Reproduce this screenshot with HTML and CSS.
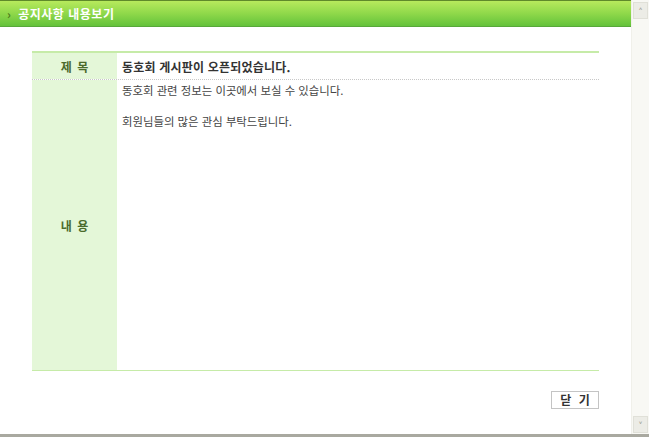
FILE: index.html
```
<!DOCTYPE html>
<html lang="ko">
<head>
    <meta charset="UTF-8">
    <title>공지사항 내용보기</title>
    <link rel="stylesheet" href="styles.css">
</head>
<body>
    <div class="frame">
        <div class="page">
            <div class="title-bar"><span class="arrow">&#8250;</span> 공지사항 내용보기</div>
            <div class="content">
                <div class="board">
                    <div class="row subject">
                        <div class="label">제 목</div>
                        <div class="value"><strong>동호회 게시판이 오픈되었습니다.</strong></div>
                    </div>
                    <div class="row body-row">
                        <div class="label">내 용</div>
                        <div class="value">
                            <p>동호회 관련 정보는 이곳에서 보실 수 있습니다.</p>
                            <p>&nbsp;</p>
                            <p>회원님들의 많은 관심 부탁드립니다.</p>
                        </div>
                    </div>
                </div>
                <div class="actions">
                    <button class="btn">닫 기</button>
                </div>
            </div>
        </div>
        <div class="scrollbar">
            <div class="scroll-btn">&#708;</div>
            <div class="scroll-track"></div>
            <div class="scroll-btn">&#709;</div>
        </div>
    </div>
</body>
</html>
```

FILE: styles.css
```
body {
    margin: 0;
    font-family: "Noto Sans CJK KR", "Noto Sans", sans-serif;
    font-size: 12px;
    color: #444;
    background-color: #fff;
}
.frame {
    display: flex;
    height: 434px;
    border-bottom: 3px solid #a9a9a0;
}
.page {
    width: 632px;
    display: flex;
    flex-direction: column;
}
.title-bar {
    height: 25px;
    line-height: 25px;
    border-top: 1px solid #5f8a2a;
    border-bottom: 1px solid #58a83a;
    background: linear-gradient(#b7ea5d, #8fd84a 50%, #64c23b);
    color: #fff;
    font-weight: bold;
    font-size: 12px;
    padding-left: 7px;
    letter-spacing: 0.5px;
}
.arrow {
    color: #4f7d1c;
    font-weight: bold;
    margin-right: 3px;
}
.content {
    padding: 24px 32px 0 32px;
}
.board {
    border-top: 2px solid #c6eba8;
    border-bottom: 1px solid #c6eba8;
}
.row {
    display: flex;
}
.subject {
    height: 26px;
    border-bottom: 1px dotted #c8c8c8;
}
.body-row {
    height: 290px;
}
.label {
    width: 85px;
    flex-shrink: 0;
    background-color: #e4f7d8;
    display: flex;
    align-items: center;
    justify-content: center;
    font-weight: bold;
    color: #4b6b2c;
    word-spacing: 2px;
}
.subject .value {
    padding-left: 5px;
    display: flex;
    align-items: center;
    color: #333;
    font-size: 12px;
    letter-spacing: 0.2px;
}
.body-row .value {
    padding: 3px 0 0 5px;
    font-size: 11.4px;
}
.value p {
    margin: 0;
    line-height: 15.5px;
}
.actions {
    display: flex;
    justify-content: flex-end;
    padding-top: 20px;
}
.btn {
    width: 48px;
    height: 18px;
    padding: 0 0 0 2px;
    border: 1px solid #c4c4c4;
    background-color: #fff;
    font-family: "Noto Sans CJK KR", sans-serif;
    font-size: 12px;
    font-weight: bold;
    color: #333;
    letter-spacing: 2px;
    line-height: 16px;
}
.scrollbar {
    width: 17px;
    display: flex;
    flex-direction: column;
    background-color: #f8f8f4;
    border-left: 1px solid #f0f0ea;
}
.scroll-btn {
    height: 15px;
    margin: 2px 1px 1px 1px;
    background-color: #ecece6;
    border: 1px solid #e0e0d8;
    color: #9c9c94;
    font-size: 11px;
    font-weight: bold;
    line-height: 17px;
    text-align: center;
}
.scroll-track {
    flex: 1;
}
```
